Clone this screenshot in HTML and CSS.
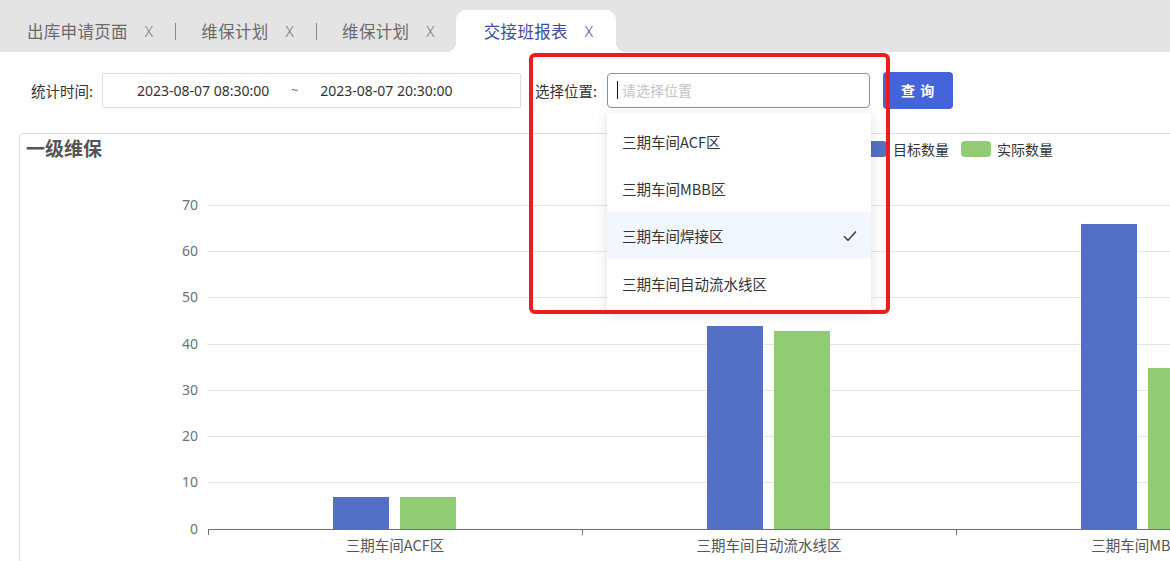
FILE: index.html
```html
<!DOCTYPE html>
<html lang="zh-CN">
<head>
<meta charset="utf-8">
<title>交接班报表</title>
<link rel="stylesheet" href="styles.css">
</head>
<body>
<div class="tabs">
  <div class="tab first"><span class="tab-label">出库申请页面</span><span class="x">X</span></div>
  <span class="sep"></span>
  <div class="tab"><span class="tab-label">维保计划</span><span class="x">X</span></div>
  <span class="sep"></span>
  <div class="tab"><span class="tab-label">维保计划</span><span class="x">X</span></div>
  <div class="tab active"><span class="tab-label">交接班报表</span><span class="x">X</span></div>
</div>

<div class="filters">
  <span class="f-label">统计时间:</span>
  <div class="date-range">
    <span class="date">2023-08-07 08:30:00</span>
    <span class="tilde">~</span>
    <span class="date">2023-08-07 20:30:00</span>
  </div>
  <div class="loc-group">
    <span class="f-label">选择位置:</span>
    <div class="select">
      <span class="caret"></span>
      <span class="placeholder">请选择位置</span>
      <div class="dropdown">
        <div class="opt">三期车间ACF区</div>
        <div class="opt">三期车间MBB区</div>
        <div class="opt selected"><span>三期车间焊接区</span>
          <svg class="check" width="14" height="12" viewBox="0 0 14 12"><path d="M1 6.2 L5 10.2 L13 1.5" fill="none" stroke="#333" stroke-width="1.4"/></svg>
        </div>
        <div class="opt">三期车间自动流水线区</div>
      </div>
    </div>
    <div class="red-box"></div>
  </div>
  <button class="btn">查 询</button>
</div>

<div class="card">
  <div class="card-head">
    <span class="card-title">一级维保</span>
    <div class="legend">
      <span class="lg-item"><span class="swatch blue"></span>目标数量</span>
      <span class="lg-item"><span class="swatch green"></span>实际数量</span>
    </div>
  </div>
  <svg class="chart" width="1280" height="400" viewBox="0 0 1280 400">
    <g transform="translate(-20,-166)">
      <g stroke="#e0e6f1" stroke-width="1">
        <line x1="208" y1="205.5" x2="1300" y2="205.5"/>
        <line x1="208" y1="251.5" x2="1300" y2="251.5"/>
        <line x1="208" y1="297.5" x2="1300" y2="297.5"/>
        <line x1="208" y1="344.5" x2="1300" y2="344.5"/>
        <line x1="208" y1="390.5" x2="1300" y2="390.5"/>
        <line x1="208" y1="436.5" x2="1300" y2="436.5"/>
        <line x1="208" y1="482.5" x2="1300" y2="482.5"/>
      </g>
      <g class="ylab" text-anchor="end">
        <text x="198" y="210">70</text>
        <text x="198" y="256">60</text>
        <text x="198" y="302">50</text>
        <text x="198" y="349">40</text>
        <text x="198" y="395">30</text>
        <text x="198" y="441">20</text>
        <text x="198" y="487">10</text>
        <text x="198" y="534">0</text>
      </g>
      <rect x="333" y="497" width="56" height="32.5" fill="#5470c6"/>
      <rect x="400" y="497" width="56" height="32.5" fill="#91cc75"/>
      <rect x="707" y="326" width="56" height="203.5" fill="#5470c6"/>
      <rect x="774" y="331" width="56" height="198.5" fill="#91cc75"/>
      <rect x="1081" y="224" width="56" height="305.5" fill="#5470c6"/>
      <rect x="1148" y="368" width="56" height="161.5" fill="#91cc75"/>
      <g stroke="#6e7079" stroke-width="1">
        <line x1="208" y1="529.5" x2="1300" y2="529.5"/>
        <line x1="208.5" y1="529.5" x2="208.5" y2="535"/>
        <line x1="582.5" y1="529.5" x2="582.5" y2="535"/>
        <line x1="956.5" y1="529.5" x2="956.5" y2="535"/>
      </g>
      <g class="xlab" text-anchor="middle">
        <text x="395" y="551">三期车间ACF区</text>
        <text x="769" y="551">三期车间自动流水线区</text>
        <text x="1143" y="551">三期车间MBB区</text>
      </g>
    </g>
  </svg>
</div>
</body>
</html>
```

FILE: styles.css
```css
* { box-sizing: border-box; }
html, body { margin: 0; padding: 0; }
body {
  width: 1170px;
  height: 561px;
  overflow: hidden;
  background: #fff;
  font-family: "Noto Sans", "Noto Sans CJK SC", sans-serif;
  color: #333;
}

/* tabs */
.tabs {
  height: 52px;
  background: #e4e4e4;
  display: flex;
  align-items: flex-end;
  padding-left: 27px;
}
.tab {
  height: 42px;
  display: flex;
  align-items: center;
  gap: 17px;
  font-family: "Noto Sans CJK SC", sans-serif;
  font-size: 16.5px;
  letter-spacing: 0.3px;
  color: #6a6a6a;
}
.tab .x {
  font-family: "Noto Sans", sans-serif;
  font-size: 15px;
  font-weight: 300;
  color: #777;
}
.sep {
  width: 1px;
  height: 17px;
  background: #8a8a8a;
  margin: 0 25px 12px 22px;
}
.tab.active {
  position: relative;
  margin-left: 21px;
  padding: 0 23px 0 28px;
  background: #fff;
  border-radius: 10px 10px 0 0;
  color: #3e4b9e;
}
.tab.active .x { color: #3e4b9e; }
.tab.active::before,
.tab.active::after {
  content: "";
  position: absolute;
  bottom: 0;
  width: 10px;
  height: 10px;
}
.tab.active::before {
  left: -10px;
  background: radial-gradient(circle at 0 0, transparent 10px, #fff 10.5px);
}
.tab.active::after {
  right: -10px;
  background: radial-gradient(circle at 100% 0, transparent 10px, #fff 10.5px);
}

/* filters */
.filters {
  display: flex;
  align-items: center;
  height: 36px;
  margin-top: 20px;
  padding-left: 31px;
}
.f-label {
  font-family: "Noto Sans CJK SC", sans-serif;
  font-size: 14.5px;
  color: #333;
  margin-right: 9px;
}
.date-range {
  width: 419px;
  height: 35px;
  border: 1px solid #dcdfe6;
  border-radius: 2px;
  display: flex;
  align-items: center;
  padding-left: 34px;
  font-size: 14px;
  color: #333;
}
.tilde { margin: 0 22px 0 22px; color: #666; font-size: 12px; }
.loc-group {
  position: relative;
  display: flex;
  align-items: center;
  margin-left: 14px;
}
.loc-group .f-label { margin-right: 10px; }
.select {
  position: relative;
  width: 263px;
  height: 35px;
  border: 1px solid #7d8edf;
  border-radius: 4px;
  display: flex;
  align-items: center;
  padding-left: 9px;
}
.caret {
  width: 1px;
  height: 18px;
  background: #111;
  margin-right: 4px;
}
.placeholder {
  font-family: "Noto Sans CJK SC", sans-serif;
  font-size: 14px;
  color: #c0c4cc;
}
.dropdown {
  position: absolute;
  left: -1px;
  top: 39px;
  width: 264px;
  height: 200px;
  overflow: hidden;
  background: #fff;
  padding: 5px 0;
  box-shadow: 0 2px 12px rgba(0, 0, 0, 0.12);
  z-index: 5;
}
.opt {
  height: 47.3px;
  display: flex;
  align-items: center;
  justify-content: space-between;
  padding: 0 14px 0 15px;
  font-family: "Noto Sans CJK SC", sans-serif;
  font-size: 14.5px;
  color: #333;
}
.opt.selected { background: #f2f6ff; }
.red-box {
  position: absolute;
  left: -6px;
  top: -20px;
  width: 361px;
  height: 261px;
  border: 4px solid #ec1d1d;
  border-radius: 6px;
  z-index: 10;
  pointer-events: none;
}
.btn {
  margin-left: 13px;
  width: 70px;
  height: 37px;
  border: none;
  border-radius: 4px;
  background: #4564db;
  color: #fff;
  font-family: "Noto Sans CJK SC", sans-serif;
  font-size: 14px;
  font-weight: 700;
  letter-spacing: 1px;
}

/* card */
.card {
  margin: 25px 0 0 19px;
  width: 1300px;
  height: 500px;
  border: 1px solid #dcdfe6;
  border-radius: 4px 0 0 0;
}
.card-head {
  height: 32px;
  display: flex;
  align-items: center;
  padding-left: 6px;
}
.card-title {
  width: 76px;
  margin-top: -5px;
  font-family: "Noto Sans CJK SC", sans-serif;
  font-size: 19px;
  font-weight: 700;
  color: #555;
}
.legend {
  display: flex;
  align-items: center;
  gap: 12px;
  margin-left: 755px;
  margin-top: -3px;
}
.lg-item {
  display: flex;
  align-items: center;
  gap: 6px;
  font-family: "Noto Sans CJK SC", sans-serif;
  font-size: 14px;
  color: #333;
}
.swatch { width: 30px; height: 16px; border-radius: 4px; }
.swatch.blue { background: #5470c6; }
.swatch.green { background: #91cc75; }
.chart { display: block; }
.ylab text { font-family: "Noto Sans", sans-serif; font-size: 14px; fill: #6e7079; }
.xlab text { font-family: "Noto Sans CJK SC", sans-serif; font-size: 14.5px; fill: #555; }
```
